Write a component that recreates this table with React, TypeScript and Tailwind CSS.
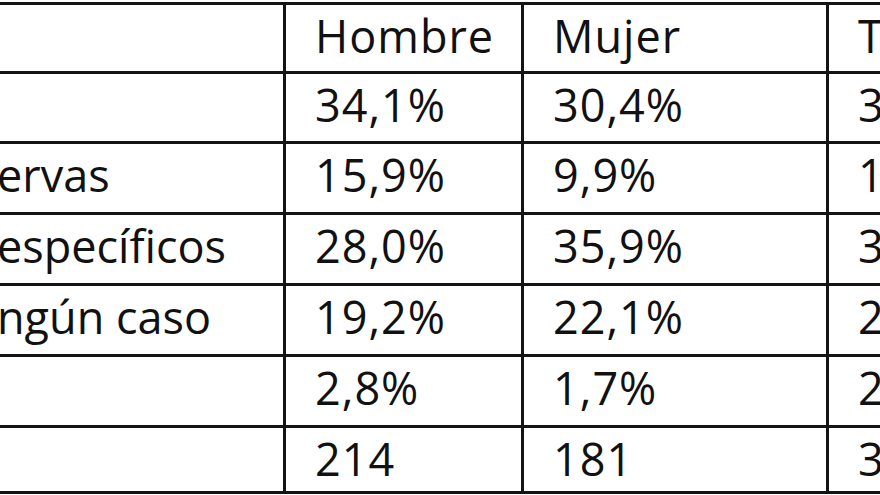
export default function App() {
  const rows: string[][] = [
    ["", "Hombre", "Mujer", "Total"],
    ["", "34,1%", "30,4%", "32,4%"],
    ["ervas", "15,9%", "9,9%", "13,2%"],
    ["específicos", "28,0%", "35,9%", "31,6%"],
    ["ngún caso", "19,2%", "22,1%", "20,5%"],
    ["", "2,8%", "1,7%", "2,3%"],
    ["", "214", "181", "395"],
  ];
  return (
    <div className="w-[880px] h-[495px] overflow-hidden bg-white font-['Open_Sans',sans-serif] font-medium text-[#111111] text-[45px] tracking-[1px]">
      <div className="mt-[2px] w-[963px] grid grid-cols-[283px_235px_302px_134px] grid-rows-[66px_67px_68px_68px_68px_68px_63px] gap-[3px] bg-[#141414] border-y-[3px] border-[#141414]">
        {rows.map((r, i) =>
          r.map((c, j) => (
            <div
              key={`${i}-${j}`}
              className={
                j === 0
                  ? "bg-white overflow-hidden whitespace-nowrap pt-[2px] leading-[58px]"
                  : "bg-white overflow-hidden whitespace-nowrap pt-[2px] leading-[58px] pl-[29px]"
              }
            >
              {j === 0 ? <span className="block ml-[-3px] tracking-[0px]">{c}</span> : c}
            </div>
          ))
        )}
      </div>
    </div>
  );
}
